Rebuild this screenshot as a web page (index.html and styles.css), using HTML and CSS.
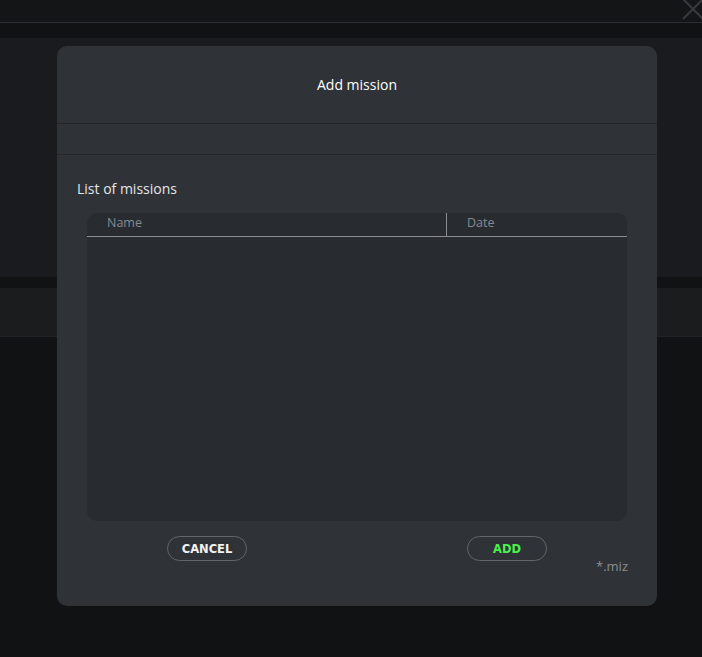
FILE: index.html
```html
<!DOCTYPE html>
<html>
<head>
<meta charset="utf-8">
<link rel="stylesheet" href="styles.css">
</head>
<body>
<div class="page">
  <header class="topbar">
    <svg class="close-x" width="30" height="30" viewBox="0 0 30 30">
      <path d="M4 23 L24 3 M4 3 L24 23" stroke="#363a3f" stroke-width="2" fill="none"/>
    </svg>
  </header>
  <div class="gap-top"></div>
  <section class="grid-area"></section>
  <div class="gap-mid"></div>
  <section class="band"></section>
  <div class="rest"></div>

  <div class="modal">
    <div class="modal-header">Add mission</div>
    <div class="modal-tabs"></div>
    <div class="modal-body">
      <div class="list-label">List of missions</div>
      <div class="table">
        <div class="table-head">
          <div class="col col-name">Name</div>
          <div class="col col-date">Date</div>
        </div>
        <div class="table-body"></div>
      </div>
      <div class="footer">
        <div class="btn-cell"><button class="btn btn-cancel">CANCEL</button></div>
        <div class="btn-cell"><button class="btn btn-add">ADD</button></div>
      </div>
      <div class="ext">*.miz</div>
    </div>
  </div>
</div>
</body>
</html>
```

FILE: styles.css
```css
* { box-sizing: border-box; }
html, body { margin: 0; padding: 0; background: #111214; }
body { font-family: "Open Sans", "Liberation Sans", sans-serif; }
.page { position: relative; width: 702px; height: 657px; overflow: hidden; display: flex; flex-direction: column; }
.topbar { height: 23px; background: #141517; border-bottom: 1px solid #2a2c30; position: relative; }
.close-x { position: absolute; left: 679px; top: -4px; }
.gap-top { height: 15px; background: #111214; }
.grid-area { height: 239px; background: #1a1b1e; }
.gap-mid { height: 11px; background: #111214; }
.band { height: 49px; background: #1b1c1e; border-bottom: 1px solid #222326; }
.rest { flex: 1; background: #111214; }

.modal {
  position: absolute; left: 57px; top: 46px; width: 600px; height: 560px;
  background: #2f3237; border-radius: 10px;
  display: flex; flex-direction: column;
}
.modal-header {
  height: 78px; display: flex; align-items: center; justify-content: center;
  color: #ffffff; font-size: 14px; padding-bottom: 1px;
  border-bottom: 1px solid #24262a;
}
.modal-tabs { height: 31px; border-bottom: 1px solid #24262a; }
.modal-body { flex: 1; display: flex; flex-direction: column; padding: 24px 30px 0 30px; position: relative; }
.list-label { color: #e4e6e8; font-size: 14px; margin-left: -10px; height: 20px; line-height: 20px; }
.table {
  margin-top: 14px; height: 308px; background: #282b30; border-radius: 10px;
  display: flex; flex-direction: column; overflow: hidden;
}
.table-head { height: 24px; display: flex; border-bottom: 1px solid #8a8c8f; }
.col { font-size: 12.5px; color: #858b92; line-height: 20px; padding-left: 20px; }
.col-name { width: 360px; border-right: 1px solid #8a8c8f; }
.col-date { flex: 1; }
.table-body { flex: 1; }
.footer { display: grid; grid-template-columns: 1fr 1fr; margin: 15px -30px 0 -30px; }
.btn-cell { display: flex; justify-content: center; }
.btn {
  width: 80px; height: 25px; border-radius: 13px; border: 1px solid #62656a;
  background: transparent; font-family: "DejaVu Sans", Verdana, sans-serif;
  font-weight: bold; font-size: 11.5px; letter-spacing: 0px; padding: 0; cursor: pointer;
}
.btn-cancel { color: #f2f2f2; }
.btn-add { color: #4cf04c; }
.ext { position: absolute; right: 29px; top: 402px; color: #8b8e92; font-size: 13px; }
```
